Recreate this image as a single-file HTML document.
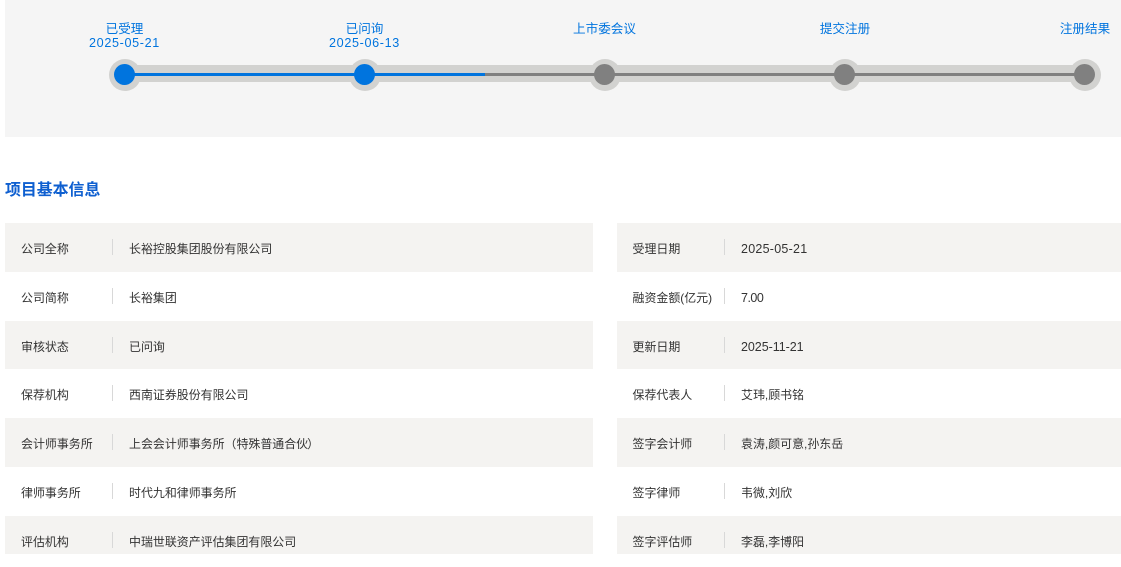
<!DOCTYPE html>
<html lang="zh">
<head>
<meta charset="utf-8">
<style>
html,body{margin:0;padding:0;background:#fff}
body{width:1121px;height:554px;overflow:hidden;position:relative;font-family:"Liberation Sans","Noto Sans CJK SC",sans-serif}
.a{position:absolute}
.panel{left:5px;top:0;width:1116px;height:137px;background:#f5f5f5}
.ring{width:32px;height:32px;border-radius:50%;top:59px;background:#d2d2d0}
.track{left:125px;top:65px;width:960px;height:17px;background:#d2d2d0}
.line{left:125px;top:73px;width:960px;height:3px;background:#808080}
.blue{left:125px;top:73px;width:360px;height:3px;background:#0074de}
.dot{width:21px;height:21px;border-radius:50%;top:64px;background:#808080}
.dot.on{background:#0074de}
.st{top:22px;width:140px;text-align:center;color:#0074de;font-size:12.6px;line-height:14px;white-space:nowrap}
.st span{letter-spacing:.65px}
.title{left:5px;top:181px;font-size:15.9px;line-height:20px;font-weight:700;color:#0e5fd0}
.row{height:49px;background:transparent}
.g{background:#f4f3f1}
.l{left:5px;width:588px}
.r{left:617px;width:504px}
.t{position:absolute;top:1px;line-height:50px;font-size:11.95px;color:#333;white-space:nowrap}
.t.n{font-size:12.5px;letter-spacing:.25px}
.d{position:absolute;top:16px;width:1px;height:16px;background:#d8d8d8}
</style>
</head>
<body>
<div class="a panel"></div>
<div class="a ring" style="left:109px"></div>
<div class="a ring" style="left:349px"></div>
<div class="a ring" style="left:589px"></div>
<div class="a ring" style="left:829px"></div>
<div class="a ring" style="left:1069px"></div>
<div class="a track"></div>
<div class="a line"></div>
<div class="a blue"></div>
<div class="a dot on" style="left:114px"></div>
<div class="a dot on" style="left:354px"></div>
<div class="a dot" style="left:594px"></div>
<div class="a dot" style="left:834px"></div>
<div class="a dot" style="left:1074px"></div>
<div class="a st" style="left:54.5px">已受理<br><span>2025-05-21</span></div>
<div class="a st" style="left:294.5px">已问询<br><span>2025-06-13</span></div>
<div class="a st" style="left:534.5px">上市委会议</div>
<div class="a st" style="left:775px">提交注册</div>
<div class="a st" style="left:1015px">注册结果</div>
<div class="a title">项目基本信息</div>

<div class="a row g l" style="top:223px"><div class="t" style="left:16px">公司全称</div><div class="d" style="left:107px"></div><div class="t" style="left:124px">长裕控股集团股份有限公司</div></div>
<div class="a row l" style="top:272px"><div class="t" style="left:16px">公司简称</div><div class="d" style="left:107px"></div><div class="t" style="left:124px">长裕集团</div></div>
<div class="a row g l" style="top:321px;height:48px"><div class="t" style="left:16px">审核状态</div><div class="d" style="left:107px"></div><div class="t" style="left:124px">已问询</div></div>
<div class="a row l" style="top:369px"><div class="t" style="left:16px">保荐机构</div><div class="d" style="left:107px"></div><div class="t" style="left:124px">西南证券股份有限公司</div></div>
<div class="a row g l" style="top:418px"><div class="t" style="left:16px">会计师事务所</div><div class="d" style="left:107px"></div><div class="t" style="left:124px">上会会计师事务所（特殊普通合伙<span style="margin-left:-1px">）</span></div></div>
<div class="a row l" style="top:467px"><div class="t" style="left:16px">律师事务所</div><div class="d" style="left:107px"></div><div class="t" style="left:124px">时代九和律师事务所</div></div>
<div class="a row g l" style="top:516px;height:38px"><div class="t" style="left:16px">评估机构</div><div class="d" style="left:107px"></div><div class="t" style="left:124px">中瑞世联资产评估集团有限公司</div></div>

<div class="a row g r" style="top:223px"><div class="t" style="left:15.5px">受理日期</div><div class="d" style="left:107px"></div><div class="t n" style="left:124px">2025-05-21</div></div>
<div class="a row r" style="top:272px"><div class="t" style="left:15.5px">融资金额(亿元)</div><div class="d" style="left:107px"></div><div class="t n" style="left:124px;letter-spacing:-.5px">7.00</div></div>
<div class="a row g r" style="top:321px;height:48px"><div class="t" style="left:15.5px">更新日期</div><div class="d" style="left:107px"></div><div class="t n" style="left:124px;letter-spacing:-.05px">2025-11-21</div></div>
<div class="a row r" style="top:369px"><div class="t" style="left:15.5px">保荐代表人</div><div class="d" style="left:107px"></div><div class="t" style="left:124px">艾玮,顾书铭</div></div>
<div class="a row g r" style="top:418px"><div class="t" style="left:15.5px">签字会计师</div><div class="d" style="left:107px"></div><div class="t" style="left:124px">袁涛,颜可意,孙东岳</div></div>
<div class="a row r" style="top:467px"><div class="t" style="left:15.5px">签字律师</div><div class="d" style="left:107px"></div><div class="t" style="left:124px">韦微,刘欣</div></div>
<div class="a row g r" style="top:516px;height:38px"><div class="t" style="left:15.5px">签字评估师</div><div class="d" style="left:107px"></div><div class="t" style="left:124px">李磊,李博阳</div></div>
</body>
</html>
